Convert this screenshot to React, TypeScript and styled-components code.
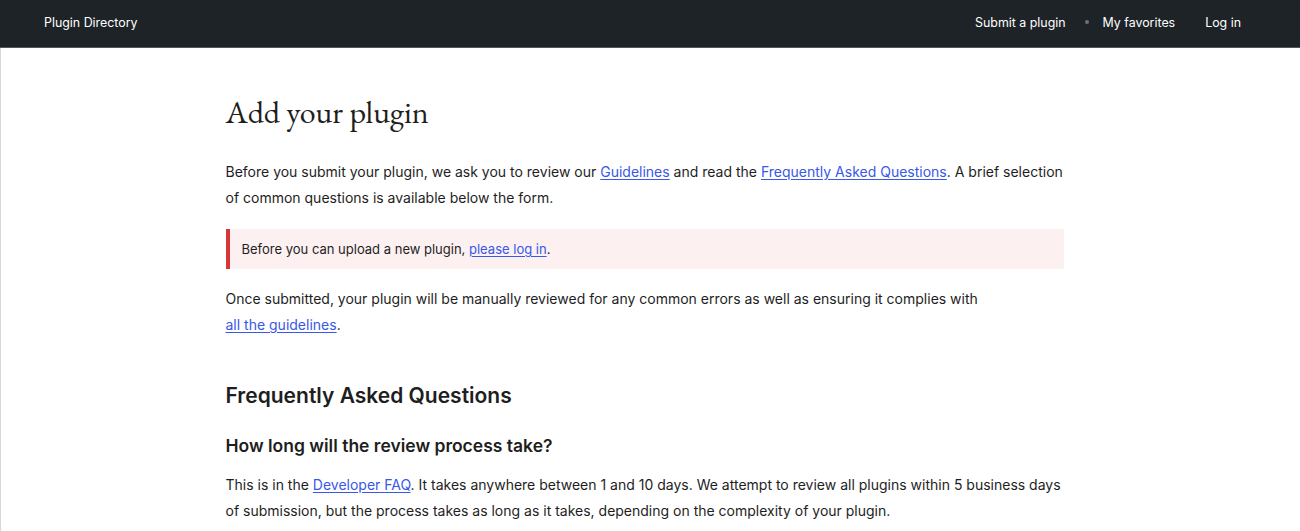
import styled, { createGlobalStyle } from 'styled-components'

const GlobalStyle = createGlobalStyle`
  body {
    margin: 0;
    font-family: Inter, "Noto Sans", sans-serif;
    color: #1e1e1e;
    background: white;
  }
`

const Page = styled.div`
  min-height: 531px;
  border-left: 1px solid #d8d8d8;
`

const Header = styled.header`
  background: #1e2327;
  height: 48px;
  padding: 0 59px 3px 44px;
  display: flex;
  align-items: center;
  border-bottom: 1px solid #50575e;
  box-sizing: border-box;
  margin-left: -1px;
`

const Brand = styled.a`
  color: white;
  font-size: 12.4px;
  text-decoration: none;
  margin-right: auto;
`

const NavList = styled.ul`
  list-style: none;
  display: flex;
  align-items: center;
  margin: 0;
  padding: 0;
`

const NavItem = styled.li<{ $gap?: number }>`
  margin-left: ${p => p.$gap ?? 0}px;
  display: flex;
  align-items: center;
`

const NavLink = styled.a`
  color: white;
  font-size: 12.4px;
  text-decoration: none;
`

const Dot = styled.span`
  width: 4px;
  height: 4px;
  border-radius: 50%;
  background: #6b7075;
  margin: 0 14px 0 19px;
`

const Main = styled.main`
  width: 850px;
  box-sizing: border-box;
  margin: 0 auto;
  padding: 40px 12px 0 0;
`

const Title = styled.h1`
  font-family: "EB Garamond", "Liberation Serif", serif;
  font-weight: 400;
  font-size: 32px;
  line-height: 48px;
  margin: 0 0 23px;
  color: #1e1e1e;
`

const Text = styled.p`
  font-size: 14px;
  line-height: 26px;
  margin: 0;
  color: #1e1e1e;
`

const Link = styled.a<{ $nowrap?: boolean }>`
  color: #3858e9;
  text-decoration: underline;
  text-underline-offset: 2px;
  white-space: ${p => (p.$nowrap ? 'nowrap' : 'normal')};
`

const Notice = styled.div`
  background: #fcf0f1;
  border-left: 4px solid #d63638;
  padding: 0 12px;
  height: 40px;
  display: flex;
  align-items: center;
  margin: 18px 0 17px;
  font-size: 13px;
`

const SectionTitle = styled.h2`
  font-size: 21px;
  font-weight: 600;
  line-height: 30px;
  margin: 43px 0 0;
`

const QuestionTitle = styled.h3`
  font-size: 17.5px;
  font-weight: 600;
  line-height: 26px;
  margin: 22px 0 13px;
`

function App() {
  return (
    <Page>
      <GlobalStyle />
      <Header>
        <Brand href="#">Plugin Directory</Brand>
        <NavList>
          <NavItem><NavLink href="#">Submit a plugin</NavLink></NavItem>
          <NavItem><Dot /></NavItem>
          <NavItem><NavLink href="#">My favorites</NavLink></NavItem>
          <NavItem $gap={30}><NavLink href="#">Log in</NavLink></NavItem>
        </NavList>
      </Header>
      <Main>
        <Title>Add your plugin</Title>
        <Text>
          Before you submit your plugin, we ask you to review our <Link href="#">Guidelines</Link> and read the <Link href="#">Frequently Asked Questions</Link>. A brief selection of common questions is available below the form.
        </Text>
        <Notice>
          <span>Before you can upload a new plugin, <Link href="#">please log in</Link>.</span>
        </Notice>
        <Text>
          Once submitted, your plugin will be manually reviewed for any common errors as well as ensuring it complies with <Link href="#" $nowrap>all the guidelines</Link>.
        </Text>
        <SectionTitle>Frequently Asked Questions</SectionTitle>
        <QuestionTitle>How long will the review process take?</QuestionTitle>
        <Text>
          This is in the <Link href="#">Developer FAQ</Link>. It takes anywhere between 1 and 10 days. We attempt to review all plugins within 5 business days of submission, but the process takes as long as it takes, depending on the complexity of your plugin.
        </Text>
      </Main>
    </Page>
  )
}

export default App
